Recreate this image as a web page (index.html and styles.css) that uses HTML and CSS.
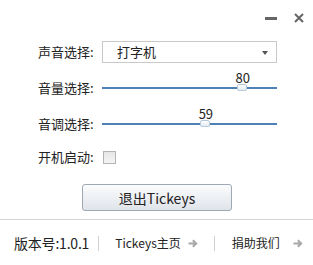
FILE: index.html
```html
<!DOCTYPE html>
<html lang="zh-CN">
<head>
<meta charset="utf-8">
<title>Tickeys</title>
<link rel="stylesheet" href="styles.css">
</head>
<body>
<div class="window">
  <header class="titlebar">
    <span class="minimize"></span>
    <svg class="close" width="10" height="10" viewBox="0 0 10 10"><path d="M1 1 L9 9 M9 1 L1 9" stroke="#666" stroke-width="2" fill="none"/></svg>
  </header>
  <main class="form">
    <div class="row row-sound">
      <span class="lbl">声音选择:</span>
      <div class="select"><span class="sel-text">打字机</span><span class="caret"></span></div>
    </div>
    <div class="row row-volume">
      <span class="lbl">音量选择:</span>
      <div class="slider"><div class="track"></div><div class="thumb" style="left:77.1%"><span class="val">80</span></div></div>
    </div>
    <div class="row row-pitch">
      <span class="lbl">音调选择:</span>
      <div class="slider"><div class="track"></div><div class="thumb" style="left:56%"><span class="val">59</span></div></div>
    </div>
    <div class="row row-boot">
      <span class="lbl">开机启动:</span>
      <span class="checkbox"></span>
    </div>
  </main>
  <div class="actions"><button class="quit">退出Tickeys</button></div>
  <footer class="footer">
    <span class="version">版本号:1.0.1</span>
    <span class="sep sep-1"></span>
    <span class="link link-home">Tickeys主页</span>
    <svg class="arrow arrow-home" width="10" height="9" viewBox="0 0 10 9"><path d="M0.5 4.5 H8 M4.8 1.2 L8.2 4.5 L4.8 7.8" stroke="#a8a8a8" stroke-width="2" fill="none"/></svg>
    <span class="sep sep-2"></span>
    <span class="link link-donate">捐助我们</span>
    <svg class="arrow arrow-donate" width="10" height="9" viewBox="0 0 10 9"><path d="M0.5 4.5 H8 M4.8 1.2 L8.2 4.5 L4.8 7.8" stroke="#a8a8a8" stroke-width="2" fill="none"/></svg>
  </footer>
</div>
</body>
</html>
```
FILE: styles.css
```css
html, body {
  margin: 0;
  padding: 0;
  background: #fff;
}
body {
  font-family: "Noto Sans CJK SC", "Noto Sans", sans-serif;
  color: #222;
  font-size: 13px;
}
.window {
  width: 313px;
  height: 265px;
  overflow: hidden;
}
.titlebar {
  height: 36px;
  display: flex;
  justify-content: flex-end;
  align-items: center;
  padding-right: 9px;
  gap: 17px;
}
.minimize {
  width: 12px;
  height: 3px;
  background: #666;
  margin-top: 1px;
}
.close {
  display: block;
}
.form {
  padding-left: 38px;
}
.row {
  display: grid;
  grid-template-columns: 64px 175px;
  align-items: center;
}
.row-sound { height: 32px; }
.row-volume { height: 40px; }
.row-pitch { height: 32px; }
.row-boot { height: 34px; }
.lbl {
  font-size: 13px;
  line-height: 16px;
  white-space: nowrap;
}
.select {
  height: 22px;
  box-sizing: border-box;
  border: 1px solid #c9c9c9;
  display: flex;
  align-items: center;
  justify-content: space-between;
  padding-left: 14px;
  padding-right: 8px;
}
.sel-text {
  font-size: 13px;
  line-height: 16px;
}
.caret {
  width: 0;
  height: 0;
  border-left: 3px solid transparent;
  border-right: 3px solid transparent;
  border-top: 4px solid #555;
  margin-top: 1px;
}
.slider {
  position: relative;
  height: 8px;
  display: flex;
  align-items: center;
}
.track {
  width: 100%;
  height: 2px;
  background: #4f80b6;
}
.thumb {
  position: absolute;
  top: 0;
  width: 10px;
  height: 7px;
  box-sizing: border-box;
  border: 1px solid #b6c8dc;
  border-radius: 2px;
  background: linear-gradient(#ffffff, #e6ecf2);
}
.val {
  position: absolute;
  left: 50%;
  bottom: 100%;
  transform: translateX(-44%);
  font-size: 13px;
  line-height: 13px;
  margin-bottom: 1px;
  color: #222;
}
.checkbox {
  width: 13px;
  height: 13px;
  box-sizing: border-box;
  margin-left: 1px;
  border: 1px solid #b4b4b4;
  background: linear-gradient(#e6e6e6, #f4f4f4);
}
.actions {
  padding-top: 10px;
  padding-bottom: 8px;
  border-bottom: 1px solid #d4d4d4;
}
.quit {
  display: block;
  margin: 0 0 0 82px;
  width: 150px;
  height: 27px;
  box-sizing: border-box;
  border: 1px solid #9fa9b4;
  border-radius: 3px;
  background: linear-gradient(#fbfcfd, #dfe4ea);
  font-family: "Noto Sans CJK SC", "Noto Sans", sans-serif;
  font-size: 14px;
  line-height: 18px;
  color: #222;
  padding: 0;
}
.footer {
  height: 46px;
  display: flex;
  align-items: center;
  padding-left: 14px;
  white-space: nowrap;
}
.footer > * {
  flex-shrink: 0;
}
.version {
  font-size: 14px;
  line-height: 18px;
  letter-spacing: -0.2px;
}
.sep {
  width: 1px;
  height: 15px;
  background: #d0d0d0;
}
.sep-1 { margin-left: 9px; }
.link {
  font-size: 12px;
  line-height: 16px;
}
.link-home { margin-left: 16px; }
.arrow { display: block; }
.arrow-home { margin-left: 7px; }
.sep-2 { margin-left: 16px; }
.link-donate { margin-left: 17px; }
.arrow-donate { margin-left: 13px; }
```
